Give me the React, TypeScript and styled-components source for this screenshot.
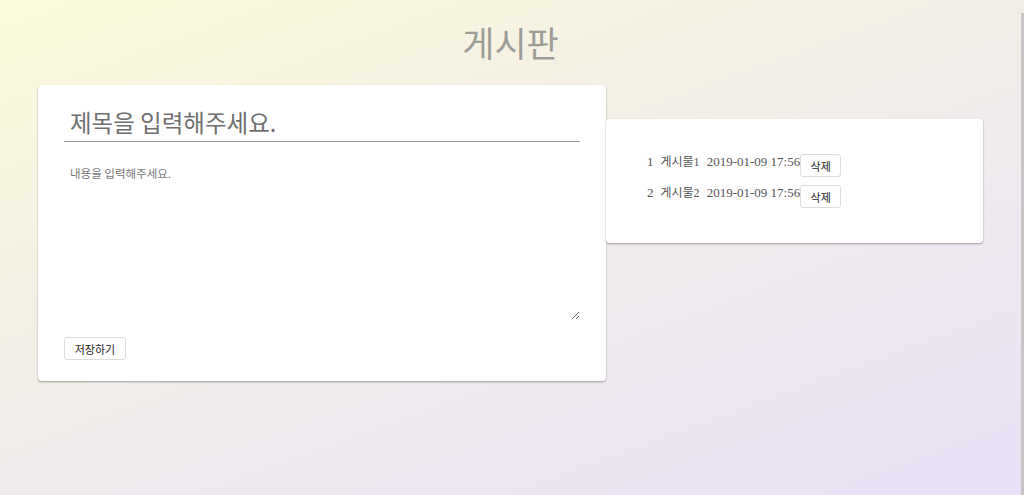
import React, {useState} from 'react';
import styled, {createGlobalStyle} from 'styled-components';

interface IPost {
	id: number
	title: string
	date: string
}

const GlobalStyle = createGlobalStyle`
	html, body {
		margin: 0;
		height: 100%;
	}
	body {
		font-family: "Liberation Serif", "Noto Sans CJK KR", serif;
		background: linear-gradient(160deg, #fcfbdc 0%, #f3f0e4 35%, #eee9ef 65%, #e9e1f6 100%);
		overflow: hidden;
	}
`

const Page = styled.div`
	display: flex;
	height: 495px;
`

const Main = styled.div`
	width: 1021px;
	display: flex;
	flex-direction: column;
	align-items: center;
`

const ScrollEdge = styled.div`
	width: 3px;
	margin-top: 13px;
	background: #c6c6c6;
`

const Title = styled.h1`
	margin: 19px 0 0;
	height: 49px;
	font-family: "Noto Sans CJK KR", sans-serif;
	font-size: 35px;
	font-weight: 400;
	line-height: 46px;
	color: #9d9d97;
`

const Row = styled.div`
	display: flex;
	align-items: flex-start;
	width: 945px;
	margin-top: 17px;
`

const Card = styled.div`
	background: #fff;
	border-radius: 4px;
	box-shadow: 0 1px 2px rgba(0, 0, 0, 0.35);
`

const EditorCard = styled(Card)`
	width: 568px;
	height: 296px;
	box-sizing: border-box;
	padding: 19px 26px 21px;
	display: flex;
	flex-direction: column;
`

const TitleInput = styled.input`
	font-family: "Noto Sans CJK KR", sans-serif;
	font-size: 23.5px;
	color: #555;
	border: none;
	border-bottom: 1px solid #9e9e9e;
	outline: none;
	padding: 2px 6px 4px;
	height: 38px;
	box-sizing: border-box;
	line-height: 30px;

	&::placeholder {
		color: #6f6f6f;
	}
`

const ContentArea = styled.textarea`
	margin-top: 17px;
	height: 163px;
	font-family: "Noto Sans CJK KR", sans-serif;
	font-size: 11.5px;
	color: #555;
	border: none;
	outline: none;
	padding: 6px 6px;
	box-sizing: border-box;

	&::placeholder {
		color: #777;
	}
`

const Button = styled.button`
	font-family: "Noto Sans CJK KR", sans-serif;
	font-size: 11px;
	color: #222;
	background: #fff;
	border: 1px solid #ddd;
	border-radius: 3px;
	padding: 0 8px;
	height: 23px;
	cursor: pointer;
`

const SaveButton = styled(Button)`
	margin-top: 17px;
	align-self: flex-start;
	width: 62px;
`

const ListCard = styled(Card)`
	width: 377px;
	margin-top: 34px;
	box-sizing: border-box;
	padding: 35px 20px 35px 41px;
`

const PostList = styled.ul`
	list-style: none;
	margin: 0;
	padding: 0;
	display: flex;
	flex-direction: column;
	gap: 8px;
`

const PostItem = styled.li`
	display: flex;
	align-items: flex-start;
	font-size: 13px;
	color: #555;
	line-height: 14px;
`

const Cell = styled.span<{ $korean?: boolean, $gap: number }>`
	margin-right: ${props => props.$gap}px;
	padding-top: 1px;
	font-size: ${props => props.$korean ? "12px" : "13px"};
`

const DeleteButton = styled(Button)`
	width: 41px;
	padding: 0;
`

const initialPosts: IPost[] = [
	{id: 1, title: '게시물1', date: '2019-01-09 17:56'},
	{id: 2, title: '게시물2', date: '2019-01-09 17:56'}
]

const App: React.FC = () => {
	const [posts, setPosts] = useState<IPost[]>(initialPosts)
	const [title, setTitle] = useState('')
	const [content, setContent] = useState('')

	const onDelete = (id: number) => setPosts(posts.filter(post => post.id !== id))

	return (
		<Page>
			<GlobalStyle/>
			<Main>
				<Title>게시판</Title>
				<Row>
					<EditorCard>
						<TitleInput value={title} onChange={e => setTitle(e.target.value)} placeholder='제목을 입력해주세요.'/>
						<ContentArea value={content} onChange={e => setContent(e.target.value)} placeholder='내용을 입력해주세요.'/>
						<SaveButton type="button">저장하기</SaveButton>
					</EditorCard>
					<ListCard>
						<PostList>
							{posts.map(post => <PostItem key={post.id}>
								<Cell $gap={7}>{post.id}</Cell>
								<Cell $gap={7} $korean>{post.title}</Cell>
								<Cell $gap={0}>{post.date}</Cell>
								<DeleteButton onClick={() => onDelete(post.id)}>삭제</DeleteButton>
							</PostItem>)}
						</PostList>
					</ListCard>
				</Row>
			</Main>
			<ScrollEdge/>
		</Page>
	);
}

export default App;
